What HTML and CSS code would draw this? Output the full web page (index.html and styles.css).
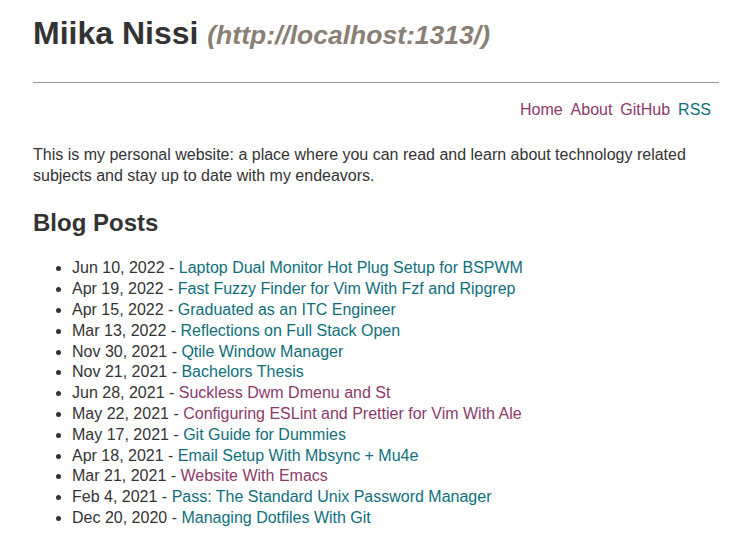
FILE: index.html
```html
<!DOCTYPE html>
<html>
<head>
<meta charset="utf-8">
<link rel="stylesheet" href="styles.css">
</head>
<body>
<header class="site-header">
  <h1 class="site-title">Miika Nissi <span class="site-url">(http://localhost:1313/)</span></h1>
  <hr class="rule">
  <nav class="nav">
    <a class="visited" href="#">Home</a>
    <a class="visited" href="#">About</a>
    <a class="visited" href="#">GitHub</a>
    <a class="link" href="#">RSS</a>
  </nav>
</header>
<main>
  <p class="intro">This is my personal website: a place where you can read and learn about technology related subjects and stay up to date with my endeavors.</p>
  <h2 class="section-title">Blog Posts</h2>
  <ul class="posts">
    <li>Jun 10, 2022 - <a class="link" href="#">Laptop Dual Monitor Hot Plug Setup for BSPWM</a></li>
    <li>Apr 19, 2022 - <a class="link" href="#">Fast Fuzzy Finder for Vim With Fzf and Ripgrep</a></li>
    <li>Apr 15, 2022 - <a class="link" href="#">Graduated as an ITC Engineer</a></li>
    <li>Mar 13, 2022 - <a class="link" href="#">Reflections on Full Stack Open</a></li>
    <li>Nov 30, 2021 - <a class="link" href="#">Qtile Window Manager</a></li>
    <li>Nov 21, 2021 - <a class="link" href="#">Bachelors Thesis</a></li>
    <li>Jun 28, 2021 - <a class="visited" href="#">Suckless Dwm Dmenu and St</a></li>
    <li>May 22, 2021 - <a class="visited" href="#">Configuring ESLint and Prettier for Vim With Ale</a></li>
    <li>May 17, 2021 - <a class="link" href="#">Git Guide for Dummies</a></li>
    <li>Apr 18, 2021 - <a class="link" href="#">Email Setup With Mbsync + Mu4e</a></li>
    <li>Mar 21, 2021 - <a class="visited" href="#">Website With Emacs</a></li>
    <li>Feb 4, 2021 - <a class="link" href="#">Pass: The Standard Unix Password Manager</a></li>
    <li>Dec 20, 2020 - <a class="link" href="#">Managing Dotfiles With Git</a></li>
  </ul>
</main>
</body>
</html>
```
FILE: styles.css
```css
html { background: #fff; }
body {
  margin: 0;
  padding: 0 16px 0 32px;
  font-family: "Liberation Sans", Arial, sans-serif;
  font-size: 16px;
  line-height: 1.3;
  color: #333;
}
.site-title {
  margin: 13px 0 0;
  padding-left: 1px;
  font-size: 32px;
  line-height: 40px;
  font-weight: bold;
  color: #333;
}
.site-url {
  font-size: 26.5px;
  font-style: italic;
  color: #8a7f74;
}
.rule {
  margin: 27px 0 0 1px;
  border: 0;
  border-top: 1px solid #999;
  height: 0;
}
.nav {
  margin-top: 17px;
  padding-right: 8px;
  text-align: right;
}
.nav a { margin-left: 3.5px; }
a { text-decoration: none; }
a.link { color: #0e6f7c; }
a.visited { color: #8b3a6b; }
.intro { margin: 24px 0 0 1px; }
.section-title {
  margin: 22px 0 0 1px;
  font-size: 24px;
  line-height: 30px;
}
.posts {
  margin: 20px 0 0;
  padding-left: 40px;
}
```
